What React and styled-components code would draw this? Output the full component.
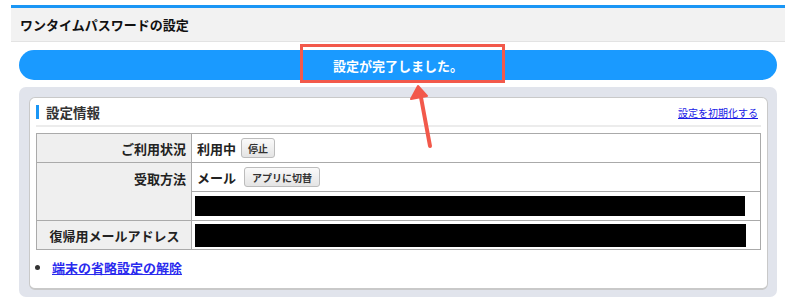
import styled, { createGlobalStyle } from "styled-components";

const GlobalStyle = createGlobalStyle`
  body {
    margin: 0;
    background: #fff;
    font-family: "Noto Sans CJK JP", "Noto Sans", sans-serif;
    color: #222;
  }
`;

const Page = styled.div`
  position: relative;
  width: 774px;
  padding: 5px 0 0 11px;
`;

const Header = styled.div`
  height: 33px;
  border-top: 3px solid #1a96f5;
  border-bottom: 1px solid #e3e3e3;
  background: #f2f2f2;
  display: flex;
  align-items: center;
  padding-left: 9px;
  font-size: 13px;
  font-weight: bold;
  color: #111;
`;

const Content = styled.div`
  padding: 8px 8px 0;
  display: flex;
  flex-direction: column;
  gap: 7px;
`;

const Notice = styled.div`
  height: 30px;
  border-radius: 15px;
  background: #1a9aff;
  color: #fff;
  font-size: 13px;
  font-weight: bold;
  display: flex;
  align-items: center;
  justify-content: center;
`;

const Panel = styled.div`
  background: #e1e4ec;
  border-radius: 7px;
  padding: 10px 9px 7px 10px;
`;

const Card = styled.div`
  background: #fff;
  border: 1px solid #c9c9c9;
  border-bottom-width: 2px;
  border-radius: 6px;
  padding: 0 6px 11px 6px;
`;

const SectionHead = styled.div`
  height: 27px;
  display: flex;
  align-items: center;
  justify-content: space-between;
  border-bottom: 2px solid #ececec;
  margin-bottom: 6px;
`;

const SectionTitle = styled.div`
  display: flex;
  align-items: center;
  gap: 7px;
  font-size: 13.5px;
  font-weight: bold;
  color: #333;

  &::before {
    content: "";
    width: 3px;
    height: 14px;
    background: #1a96f5;
  }
`;

const SmallLink = styled.a`
  font-size: 10px;
  color: #1a1ae6;
  text-decoration: underline;
  padding-right: 3px;
  margin-top: 2px;
`;

const Table = styled.table`
  width: 100%;
  border-collapse: collapse;
  border: 1px solid #aaa;
`;

const Label = styled.th`
  width: 155px;
  box-sizing: border-box;
  background: #efefef;
  border: 1px solid #aaa;
  font-size: 13px;
  font-weight: bold;
  text-align: ${(p) => p.$align || "right"};
  vertical-align: ${(p) => p.$valign || "middle"};
  padding: ${(p) => (p.$valign === "top" ? "6px" : "0")} 5px 0 6px;
  height: 28px;
  color: #222;
`;

const Value = styled.td`
  border: 1px solid #aaa;
  padding: 0 5px;
  height: 28px;
  font-size: 13px;
  font-weight: bold;
`;

const ValueRow = styled.div`
  display: flex;
  align-items: center;
  gap: ${(p) => p.$gap || 5}px;
`;

const SmallButton = styled.button`
  font-family: inherit;
  font-size: 10px;
  font-weight: bold;
  color: #333;
  height: 20px;
  padding: 0 ${(p) => p.$pad || 6}px;
  border: 1px solid #bcbcbc;
  border-radius: 3px;
  background: linear-gradient(#fafafa, #e4e4e4);
`;

const Redacted = styled.div`
  background: #000;
  height: ${(p) => p.$h}px;
  margin-right: ${(p) => p.$mr}px;
  margin-left: -2px;
`;

const LinkList = styled.ul`
  margin: 8px 0 0;
  padding-left: 16px;
  font-size: 13px;
  font-weight: bold;
  color: #333;
`;

const ListLink = styled.a`
  color: #2a2aee;
  text-decoration: underline;
`;

const Highlight = styled.div`
  position: absolute;
  left: 300px;
  top: 44px;
  width: 199px;
  height: 33px;
  border: 3px solid #f2594b;
`;

const Arrow = styled.svg`
  position: absolute;
  left: 400px;
  top: 80px;
`;

export default function App() {
  return (
    <>
      <GlobalStyle />
      <Page>
        <Header>ワンタイムパスワードの設定</Header>
        <Content>
          <Notice>設定が完了しました。</Notice>
          <Panel>
            <Card>
              <SectionHead>
                <SectionTitle>設定情報</SectionTitle>
                <SmallLink href="#">設定を初期化する</SmallLink>
              </SectionHead>
              <Table>
                <tbody>
                  <tr>
                    <Label>ご利用状況</Label>
                    <Value>
                      <ValueRow>
                        利用中<SmallButton>停止</SmallButton>
                      </ValueRow>
                    </Value>
                  </tr>
                  <tr>
                    <Label rowSpan={2} $valign="top">
                      受取方法
                    </Label>
                    <Value>
                      <ValueRow $gap={8}>
                        メール<SmallButton $pad={7}>アプリに切替</SmallButton>
                      </ValueRow>
                    </Value>
                  </tr>
                  <tr>
                    <Value>
                      <Redacted $h={20} $mr={10} />
                    </Value>
                  </tr>
                  <tr>
                    <Label $align="center">復帰用メールアドレス</Label>
                    <Value>
                      <Redacted $h={23} $mr={9} />
                    </Value>
                  </tr>
                </tbody>
              </Table>
              <LinkList>
                <li>
                  <ListLink href="#">端末の省略設定の解除</ListLink>
                </li>
              </LinkList>
            </Card>
          </Panel>
        </Content>
        <Highlight />
        <Arrow width="40" height="72" viewBox="0 0 40 72">
          <line x1="30" y1="66" x2="20" y2="12" stroke="#f2594b" strokeWidth="4" strokeLinecap="round" />
          <path d="M18 6 L11 19 L27 16 Z" fill="#f2594b" stroke="#f2594b" strokeWidth="2" strokeLinejoin="round" />
        </Arrow>
      </Page>
    </>
  );
}
